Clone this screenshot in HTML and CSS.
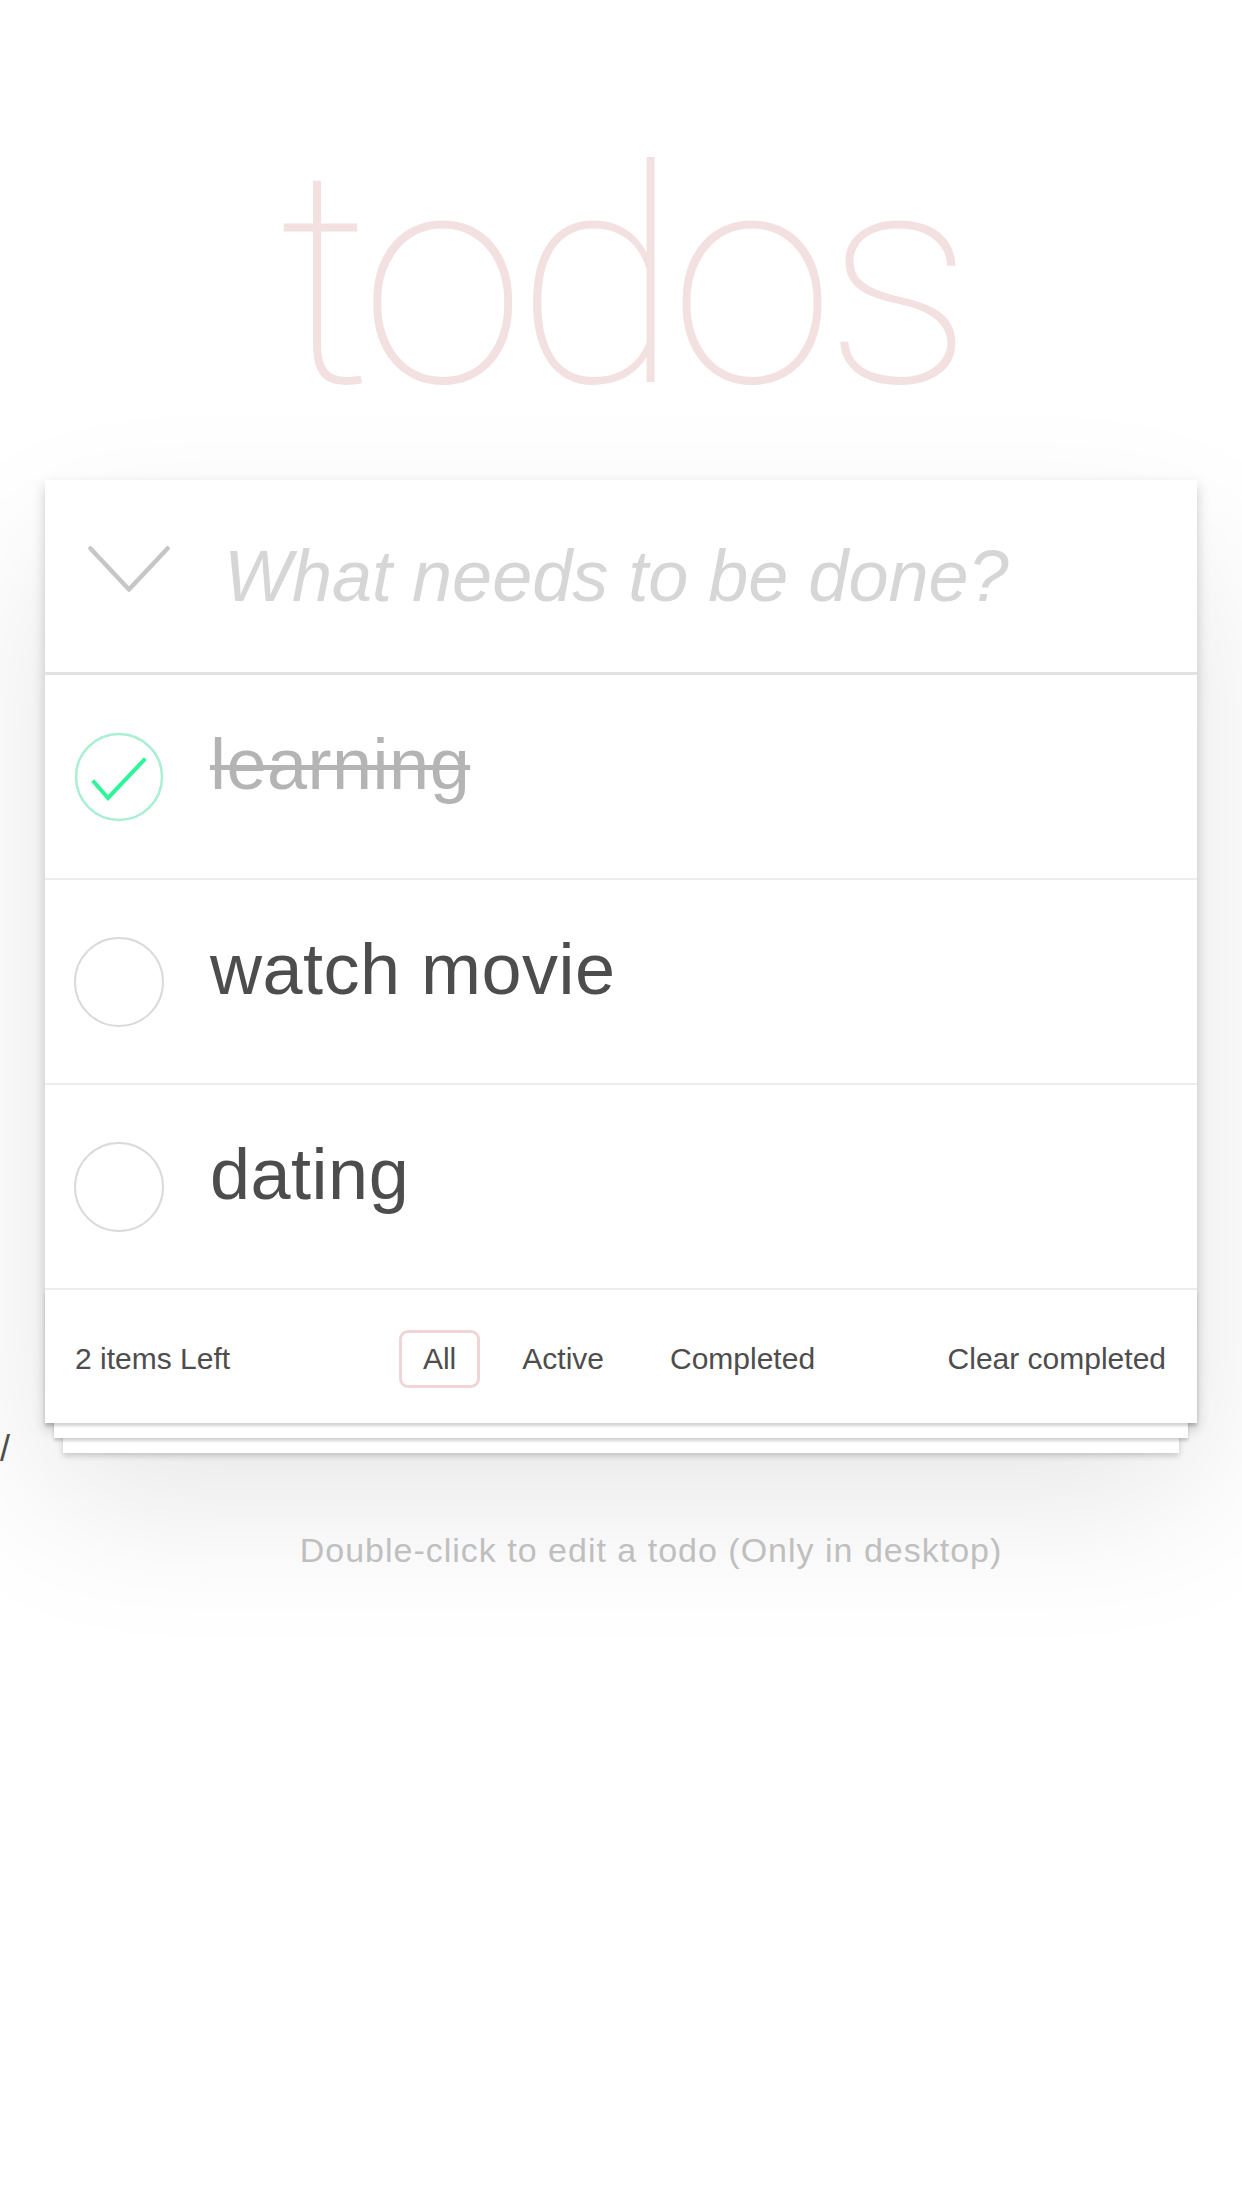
FILE: index.html
```html
<!DOCTYPE html>
<html lang="en">
<head>
<meta charset="utf-8">
<title>todos</title>
<link rel="stylesheet" href="styles.css">
</head>
<body>
<div class="page">
  <h1 class="title">todos</h1>
  <section class="todoapp">
    <header class="new-row">
      <span class="toggle-all">
        <svg width="82" height="46" viewBox="0 0 82 46"><polyline points="2.5,2.5 41,43.5 79.5,2.5" fill="none" stroke="#c6c6c6" stroke-width="4.5" stroke-linecap="round" stroke-linejoin="round"/></svg>
      </span>
      <input class="new-todo" type="text" placeholder="What needs to be done?">
    </header>
    <ul class="todo-list">
      <li class="todo done">
        <span class="check">
          <svg width="90" height="90" viewBox="0 0 90 90"><circle cx="45" cy="45" r="43" fill="none" stroke="#a9efd2" stroke-width="2.5"/><polyline points="20,50 34,66 70,28" fill="none" stroke="#2ef59a" stroke-width="4" stroke-linecap="square"/></svg>
        </span>
        <span class="label">learning</span>
      </li>
      <li class="todo">
        <span class="check"><span class="ring"></span></span>
        <span class="label">watch movie</span>
      </li>
      <li class="todo">
        <span class="check"><span class="ring"></span></span>
        <span class="label">dating</span>
      </li>
    </ul>
    <footer class="footer">
      <span class="count">2 items Left</span>
      <ul class="filters">
        <li><a class="filter selected">All</a></li>
        <li><a class="filter">Active</a></li>
        <li><a class="filter">Completed</a></li>
      </ul>
      <span class="clear">Clear completed</span>
    </footer>
  </section>
  <span class="stray">/</span>
  <p class="info">Double-click to edit a todo (Only in desktop)</p>
</div>
</body>
</html>
```
FILE: styles.css
```css
html, body {
  margin: 0;
  padding: 0;
  background: #ffffff;
}
body {
  font-family: "Liberation Sans", Arial, sans-serif;
  color: #4d4d4d;
}
.page {
  position: relative;
  width: 1242px;
  min-height: 2208px;
}
.title {
  margin: 0;
  padding-top: 130px;
  height: 300px;
  font-family: Roboto, "Liberation Sans", sans-serif;
  font-weight: 100;
  font-size: 300px;
  line-height: 300px;
  letter-spacing: -10px;
  text-align: center;
  color: rgba(175, 47, 47, 0.15);
}
.todoapp {
  width: 1152px;
  margin: 50px auto 0;
  background: #fff;
  box-shadow: 0 6px 12px rgba(0, 0, 0, 0.2), 0 75px 150px rgba(0, 0, 0, 0.1);
}
.new-row {
  height: 192px;
  border-bottom: 3px solid #e3e3e3;
  display: flex;
  align-items: center;
}
.toggle-all {
  display: flex;
  margin-left: 43px;
  margin-top: -14px;
  width: 82px;
  height: 46px;
}
.new-todo {
  flex: 1;
  margin-left: 54px;
  border: none;
  outline: none;
  padding: 0;
  background: transparent;
  font-family: "Liberation Sans", Arial, sans-serif;
  font-style: italic;
  font-size: 72px;
  line-height: 86px;
  color: #4d4d4d;
}
.new-todo::placeholder {
  color: #d6d6d6;
}
.todo-list {
  list-style: none;
  margin: 0;
  padding: 0;
}
.todo {
  height: 203px;
  border-bottom: 2px solid #ededed;
  display: flex;
  align-items: center;
}
.check {
  display: flex;
  width: 90px;
  height: 90px;
  margin-left: 29px;
}
.ring {
  width: 86px;
  height: 86px;
  border-radius: 50%;
  border: 2px solid #dadada;
}
.label {
  margin-left: 46px;
  padding-bottom: 25px;
  font-size: 72px;
  line-height: 86px;
  letter-spacing: 0.5px;
  color: #4d4d4d;
}
.done .label {
  color: #b4b4b4;
  text-decoration: line-through;
  text-decoration-thickness: 5px;
}
.footer {
  height: 133px;
  box-sizing: border-box;
  padding: 5px 31px 0 30px;
  display: grid;
  grid-template-columns: 1fr auto 1fr;
  align-items: center;
  font-size: 30px;
  color: #4d4d4d;
  box-shadow:
    0 3px 3px rgba(0, 0, 0, 0.18),
    0 24px 0 -9px #ffffff,
    0 27px 3px -9px rgba(0, 0, 0, 0.18),
    0 48px 0 -18px #ffffff,
    0 51px 6px -18px rgba(0, 0, 0, 0.18);
}
.count {
  justify-self: start;
}
.filters {
  list-style: none;
  margin: 0 0 0 -3px;
  padding: 0;
  display: flex;
}
.filter {
  display: block;
  margin: 0 9px;
  padding: 9px 21px;
  border: 3px solid transparent;
  border-radius: 9px;
  line-height: 34px;
  color: #4d4d4d;
}
.filter.selected {
  border-color: rgba(175, 47, 47, 0.2);
}
.clear {
  justify-self: end;
}
.stray {
  position: absolute;
  left: 0;
  top: 1428px;
  font-size: 36px;
  color: #4d4d4d;
}
.info {
  margin: 107px 0 0;
  padding-left: 60px;
  text-align: center;
  font-size: 34px;
  line-height: 40px;
  letter-spacing: 1px;
  color: #bfbfbf;
}
```
